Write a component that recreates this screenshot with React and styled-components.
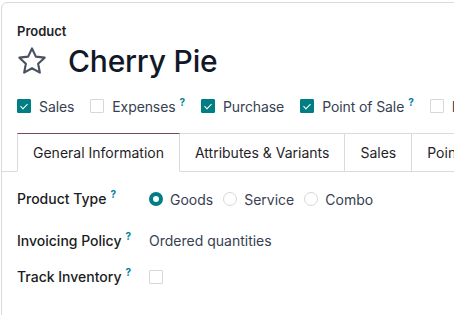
import React from 'react';
import styled, { createGlobalStyle } from 'styled-components';

const GlobalStyle = createGlobalStyle`
  html, body {
    margin: 0;
    padding: 0;
    background: #ffffff;
    overflow: hidden;
  }
  body {
    font-family: Inter, "Noto Sans", sans-serif;
    color: #1f2328;
  }
`;

const categories = [
  { label: 'Sales', checked: true },
  { label: 'Expenses', checked: false, help: true },
  { label: 'Purchase', checked: true },
  { label: 'Point of Sale', checked: true, help: true },
  { label: 'Inventory', checked: false },
];

const tabs = ['General Information', 'Attributes & Variants', 'Sales', 'Point of Sale'];

export default function App() {
  return (
    <>
      <GlobalStyle />
      <Sheet>
        <Header>
          <Caption>Product</Caption>
          <TitleRow>
            <Star width="32" height="32" viewBox="0 0 24 24">
              <path
                d="M12 2.6l2.9 6.1 6.6.8-4.9 4.6 1.3 6.6L12 17.4l-5.9 3.3 1.3-6.6-4.9-4.6 6.6-.8z"
                fill="none"
                stroke="#4a5260"
                strokeWidth="1.6"
                strokeLinejoin="round"
              />
            </Star>
            <Title>Cherry Pie</Title>
          </TitleRow>
          <Options>
            {categories.map((c) => (
              <Option key={c.label}>
                <Check checked={c.checked} />
                <OptionLabel>
                  {c.label}
                  {c.help && <Help>?</Help>}
                </OptionLabel>
              </Option>
            ))}
          </Options>
        </Header>

        <TabBar>
          {tabs.map((t, i) => (
            <Tab key={t} active={i === 0}>
              {t}
            </Tab>
          ))}
        </TabBar>

        <Form>
          <FieldRow space={16}>
            <FieldLabel>
              Product Type<Help>?</Help>
            </FieldLabel>
            <Radios>
              <RadioItem>
                <Radio checked />
                Goods
              </RadioItem>
              <RadioItem>
                <Radio />
                Service
              </RadioItem>
              <RadioItem>
                <Radio />
                Combo
              </RadioItem>
            </Radios>
          </FieldRow>
          <FieldRow space={20}>
            <FieldLabel>
              Invoicing Policy<Help>?</Help>
            </FieldLabel>
            <Value>Ordered quantities</Value>
          </FieldRow>
          <FieldRow space={14}>
            <FieldLabel>
              Track Inventory<Help>?</Help>
            </FieldLabel>
            <Check />
          </FieldRow>
        </Form>
      </Sheet>
    </>
  );
}

/// /////////////////////////
/// Sheet
const Sheet = styled.div`
  margin: 2px 0 0 1px;
  width: 520px;
  height: 340px;
  border: 1px solid #d8dadd;
  border-radius: 6px 0 0 0;
  background: #ffffff;
`;

const Header = styled.div`
  padding: 20px 0 0 15px;
`;

const Caption = styled.div`
  font-size: 13px;
  font-weight: 600;
  line-height: 16px;
  color: #1f2328;
`;

const TitleRow = styled.div`
  display: flex;
  align-items: center;
  gap: 20px;
  margin-top: 4px;
  height: 36px;
`;

const Star = styled.svg`
  flex: none;
  margin-left: -1px;
`;

const Title = styled.h1`
  margin: 0;
  font-size: 30px;
  font-weight: 500;
  line-height: 36px;
  color: #111827;
  letter-spacing: -0.2px;
`;

/// /////////////////////////
/// Category checkboxes
const Options = styled.div`
  display: flex;
  align-items: center;
  gap: 16px;
  margin-top: 17px;
  height: 20px;
  white-space: nowrap;
`;

const Option = styled.label`
  display: flex;
  align-items: center;
  gap: 8px;
`;

const OptionLabel = styled.span`
  font-size: 14px;
  color: #374151;
  letter-spacing: -0.1px;
`;

const Check = styled.span`
  flex: none;
  align-self: center;
  box-sizing: border-box;
  width: 14px;
  height: 14px;
  border-radius: 1px;
  border: 1px solid ${(p) => (p.checked ? '#017e84' : '#d5d8dc')};
  background: ${(p) => (p.checked ? '#017e84' : '#ffffff')};
  position: relative;

  &::after {
    content: '';
    display: ${(p) => (p.checked ? 'block' : 'none')};
    position: absolute;
    left: 3.5px;
    top: 1.5px;
    width: 3px;
    height: 6px;
    border: solid #ffffff;
    border-width: 0 1.8px 1.8px 0;
    transform: rotate(45deg);
  }
`;

const Help = styled.sup`
  margin-left: 4px;
  font-size: 10px;
  font-weight: 700;
  color: #017e9e;
  vertical-align: 6px;
  line-height: 0;
`;

/// /////////////////////////
/// Tabs
const TabBar = styled.div`
  display: flex;
  margin-top: 17px;
  padding-left: 15px;
  border-bottom: 1px solid #d8dadd;
  white-space: nowrap;
`;

const Tab = styled.div`
  box-sizing: border-box;
  height: 39px;
  margin-bottom: -1px;
  padding: 0 15px;
  display: flex;
  align-items: center;
  font-size: 14px;
  color: #1f2328;
  background: #ffffff;
  border: 1px solid #d8dadd;
  border-left-width: ${(p) => (p.active ? '1px' : '0')};
  border-top-color: ${(p) => (p.active ? '#714b67' : '#d8dadd')};
  border-bottom-color: ${(p) => (p.active ? '#ffffff' : '#d8dadd')};
`;

/// /////////////////////////
/// Form
const Form = styled.div`
  padding-left: 15px;
`;

const FieldRow = styled.div`
  display: grid;
  grid-template-columns: 132px auto;
  align-items: center;
  height: 22px;
  margin-top: ${(p) => p.space}px;
`;

const FieldLabel = styled.div`
  font-size: 14px;
  font-weight: 500;
  line-height: 22px;
  color: #1a1d21;
  white-space: nowrap;
`;

const Value = styled.div`
  font-size: 14px;
  line-height: 22px;
  color: #374151;
`;

const Radios = styled.div`
  display: flex;
  align-items: center;
  gap: 10px;
`;

const RadioItem = styled.label`
  display: flex;
  align-items: center;
  gap: 7px;
  font-size: 14px;
  color: #374151;
`;

const Radio = styled.span`
  box-sizing: border-box;
  width: 14px;
  height: 14px;
  border-radius: 50%;
  border: ${(p) => (p.checked ? '4px solid #017e84' : '1px solid #d5d8dc')};
  background: #ffffff;
`;
